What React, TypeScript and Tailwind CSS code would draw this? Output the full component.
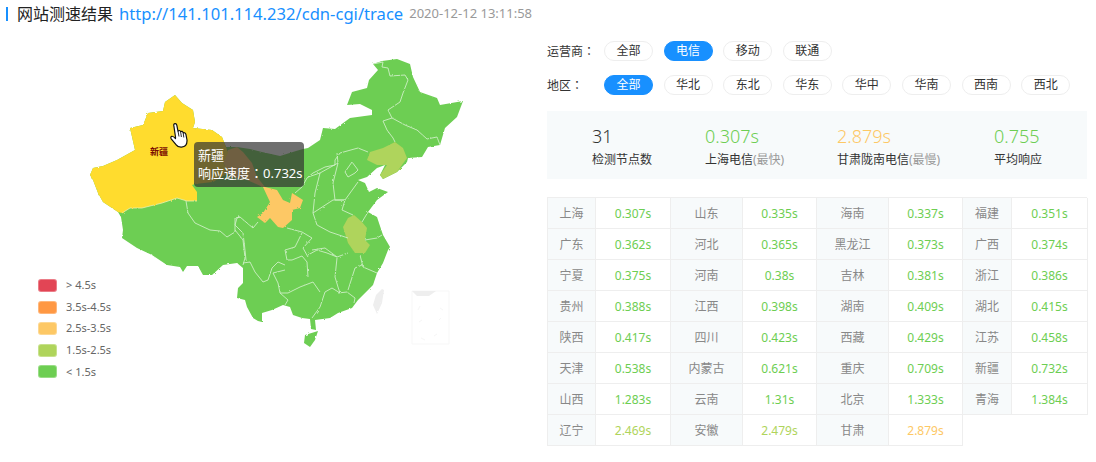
const GREEN = "#6dce52";

const OPERATORS = ["全部", "电信", "移动", "联通"];
const REGIONS = ["全部", "华北", "东北", "华东", "华中", "华南", "西南", "西北"];

const LEGEND = [
  { color: "#e24555", label: "> 4.5s" },
  { color: "#ff9843", label: "3.5s-4.5s" },
  { color: "#fdc865", label: "2.5s-3.5s" },
  { color: "#afd45b", label: "1.5s-2.5s" },
  { color: GREEN, label: "< 1.5s" },
];

const NODES: [string, string][] = [
  ["上海", "0.307s"], ["山东", "0.335s"], ["海南", "0.337s"], ["福建", "0.351s"],
  ["广东", "0.362s"], ["河北", "0.365s"], ["黑龙江", "0.373s"], ["广西", "0.374s"],
  ["宁夏", "0.375s"], ["河南", "0.38s"], ["吉林", "0.381s"], ["浙江", "0.386s"],
  ["贵州", "0.388s"], ["江西", "0.398s"], ["湖南", "0.409s"], ["湖北", "0.415s"],
  ["陕西", "0.417s"], ["四川", "0.423s"], ["西藏", "0.429s"], ["江苏", "0.458s"],
  ["天津", "0.538s"], ["内蒙古", "0.621s"], ["重庆", "0.709s"], ["新疆", "0.732s"],
  ["山西", "1.283s"], ["云南", "1.31s"], ["北京", "1.333s"], ["青海", "1.384s"],
  ["辽宁", "2.469s"], ["安徽", "2.479s"], ["甘肃", "2.879s"],
];

function valueColor(v: string) {
  const n = parseFloat(v);
  if (n >= 2.5) return "text-[#fdc865]";
  if (n >= 1.5) return "text-[#afd45b]";
  return "text-[#6dce52]";
}

// all map paths are in page pixels, the svg viewBox starts below the header
const CHINA =
  "M175 95L182 103L193 110L195 122L193 128L212 130L222 137L226 147L237 147L250 149L262 152L280 156L296 151L303 149L308 148L320 140L323 128L335 129L350 118L372 115L372 110L360 104L347 105L352 92L367 88L369 80L378 70L373 64L382 61L397 59L410 64L413 77L420 92L437 98L440 105L463 101L457 117L445 128L440 145L428 147L422 157L408 158L407 162L397 172L383 179L380 175L385 165L377 168L367 177L358 180L365 183L369 192L377 188L388 192L377 200L368 212L377 217L383 235L390 247L388 250L383 263L377 273L373 285L358 300L352 308L338 313L330 318L315 320L316 330L311 329L310 319L302 318L293 315L290 307L283 305L272 310L262 313L262 322L258 321L253 318L247 307L245 300L237 298L238 288L243 283L243 268L237 263L223 265L212 275L203 275L198 266L187 266L183 272L180 267L167 265L152 255L137 248L122 238L123 230L121 217L118 212L103 202L98 193L93 180L90 175L93 168L103 166L117 160L135 150L130 128L143 125L148 113L163 111L165 102Z";

const HAINAN = "M305 335L318 331L315 340L310 347L304 343Z";

const XINJIANG =
  "M175 95L182 103L193 110L195 122L193 128L212 130L222 137L226 147L228 153L223 162L228 173L213 182L195 184L192 185L197 192L197 201L187 201L177 198L162 203L142 208L130 208L122 213L118 212L103 202L98 193L93 180L90 175L93 168L103 166L117 160L135 150L130 128L143 125L148 113L163 111L165 102Z";

const GANSU =
  "M228 150L237 147L243 152L252 163L257 177L265 187L277 190L283 200L290 203L292 193L303 200L300 208L292 210L292 220L283 228L278 227L270 218L265 223L257 217L263 213L270 202L263 187L247 180L230 177L228 173L223 162Z";

const LIAONING =
  "M367 160L370 152L383 148L395 142L403 148L407 158L397 172L383 179L380 175L387 165L377 165Z";

const ANHUI =
  "M354 215L362 222L367 228L365 240L370 245L365 253L355 253L348 243L343 227L348 218Z";

const BORDERS = [
  "M373 64L383 62L382 67L388 68L390 76L405 75L408 80L403 93L400 102L388 110L392 118L383 121L387 130L393 138L395 142",
  "M392 118L405 125L417 130L427 139L437 137L440 145",
  "M368 152L358 148L340 153L335 160L335 165L325 167L313 173L307 178L302 187L295 193",
  "M337 153L338 163L320 173L308 177",
  "M338 163L333 183L335 200L345 200L358 182",
  "M345 172L352 162L358 170L355 173L348 177Z",
  "M320 173L315 193L313 213L333 200L345 200L342 210L353 215",
  "M313 213L317 225L330 232L348 238",
  "M287 228L302 232L312 238L303 248L308 257",
  "M240 217L237 218L235 225L243 233L245 250L246 260",
  "M258 222L253 228L240 217",
  "M186 201L188 213L195 223L210 230L220 231L227 237L235 232L235 218L240 217",
  "M235 230L243 240L245 258L243 265",
  "M243 263L250 262L255 272L263 282L268 280L272 268L278 262L285 265",
  "M302 233L295 247L285 250L287 260L292 260L302 256L307 262L308 277",
  "M273 273L285 270M273 273L278 283L280 293L288 293L300 287L313 282L320 292",
  "M280 293L288 300L285 305",
  "M308 255L317 250L327 253L337 257L348 253",
  "M312 250L325 248L337 257",
  "M337 258L335 277L338 287L340 293L332 288L325 292L320 307L312 318",
  "M338 293L347 292L355 298L354 303",
  "M362 265L355 268L348 290",
  "M360 255L363 267L377 273",
  "M365 240L377 238L382 235",
  "M368 212L362 222",
];

function Pill({ label, active }: { label: string; active?: boolean }) {
  return (
    <span
      className={`flex h-[20px] w-[49px] items-center justify-center rounded-full border text-xs ${
        active ? "border-[#1890ff] bg-[#1890ff] text-white" : "border-[#eeeeee] bg-white text-[#333]"
      }`}
    >
      {label}
    </span>
  );
}

function Colon() {
  return <span className="[font-family:'Noto_Sans_CJK_TC',sans-serif]">：</span>;
}

function ChinaMap() {
  return (
    <svg viewBox="0 28 540 434" className="block h-[434px] w-[540px]">
      <defs>
        <filter id="rough" x="0" y="0" width="100%" height="100%">
          <feTurbulence type="fractalNoise" baseFrequency="0.35" numOctaves="2" seed="4" />
          <feDisplacementMap in="SourceGraphic" scale="2.2" />
          <feGaussianBlur stdDeviation="0.25" />
        </filter>
      </defs>
      <g filter="url(#rough)">
        <path d={CHINA} fill={GREEN} />
        <path d={HAINAN} fill={GREEN} />
        <path d={GANSU} fill="#fdc865" />
        <path d={XINJIANG} fill="#ffdc2e" />
        <path d={LIAONING} fill="#afd45b" />
        <path d={ANHUI} fill="#afd45b" />
        {BORDERS.map((d) => (
          <path key={d} d={d} fill="none" stroke="#cdeec5" strokeWidth="0.9" />
        ))}
        <path d="M122 213L130 208L142 208L162 203L177 198L187 201L197 201" fill="none" stroke="#e8f0b0" strokeWidth="0.8" />
        <path d="M382 289L384 290L382 303L377 314L373 305L376 295Z" fill="#eeeeee" />
      </g>
      <path d="M412 291H449V344H412Z" fill="#ffffff" stroke="#f7f7f7" strokeWidth="1" />
      <path d="M412 291H436L429 296H417Z" fill="#eeeeee" />
      <path d="M418 310L420 306M440 308L443 310M419 322L422 320M439 320L441 318M421 338L425 340M434 336L437 334" stroke="#f6f6f6" strokeWidth="1" />
    </svg>
  );
}

function HandCursor() {
  return (
    <svg viewBox="0 0 18 25" className="absolute left-[170px] top-[95px] h-[25px] w-[18px]">
      <path
        d="M5.5 14L3.8 2.4Q3.6.7 5 .6Q6.4.5 6.8 2.2L8 8.2Q9.8 6.6 10.6 8.6Q12.4 7.6 13.2 9.8Q15.4 9.2 15.9 11.4L17 17Q17.4 23.8 11.5 24.2Q8 24.4 6.2 21.8L1.2 15.8Q.2 14 1.8 13.3Q3.2 12.9 5.5 15.6Z"
        fill="#ffffff"
        stroke="#111111"
        strokeWidth="1.2"
        strokeLinejoin="round"
      />
      <path d="M8 8.2L9 13.5M10.6 8.6L11.4 14M13.2 9.8L13.8 14.5" fill="none" stroke="#111111" strokeWidth="0.9" />
    </svg>
  );
}

export default function App() {
  return (
    <div className="h-[462px] w-[1096px] overflow-hidden bg-white text-[#333] [font-family:'Noto_Sans','Noto_Sans_CJK_SC',sans-serif]">
      {/* Header */}
      <div className="flex h-[28px] items-center whitespace-nowrap pl-[6px]">
        <span className="mr-[9px] h-[14px] w-[2px] bg-[#1890ff]" />
        <span className="text-base text-[#222]">网站测速结果</span>
        <span className="ml-[6px] text-[16.6px] text-[#1890ff]">http://141.101.114.232/cdn-cgi/trace</span>
        <span className="ml-[6px] text-[13px] text-[#999]">2020-12-12 13:11:58</span>
      </div>

      <div className="flex">
        {/* Map */}
        <div className="relative h-[434px] w-[540px] shrink-0">
          <ChinaMap />
          <span className="absolute left-[150px] top-[118px] text-[9px] font-bold leading-[12px] text-[#7a0a00]">新疆</span>
          <HandCursor />
          <div className="absolute left-[194px] top-[114px] h-[45px] w-[110px] whitespace-nowrap rounded bg-[rgba(50,50,50,0.7)] px-[4px] py-[4px] text-[13px] leading-[18px] text-white">
            <div>新疆</div>
            <div>响应速度<Colon />0.732s</div>
          </div>
          <div className="absolute left-[38px] top-[251px] flex flex-col gap-[8.6px]">
            {LEGEND.map((item) => (
              <div key={item.label} className="flex h-[13px] items-center">
                <span
                  className="h-[13px] w-[19px] rounded-[3px] border border-white/30"
                  style={{ backgroundColor: item.color }}
                />
                <span className="ml-[9px] text-[11px] text-[#666]">{item.label}</span>
              </div>
            ))}
          </div>
        </div>

        {/* Filters, summary, node table */}
        <div className="ml-[7px] w-[540px] shrink-0 pt-[13px]">
          <div className="flex items-center">
            <span className="w-[57px] text-xs">运营商<Colon /></span>
            <div className="flex gap-[10.6px]">
              {OPERATORS.map((name) => (
                <Pill key={name} label={name} active={name === "电信"} />
              ))}
            </div>
          </div>
          <div className="mt-[14px] flex items-center">
            <span className="w-[57px] text-xs">地区<Colon /></span>
            <div className="flex gap-[10.6px]">
              {REGIONS.map((name) => (
                <Pill key={name} label={name} active={name === "全部"} />
              ))}
            </div>
          </div>

          <div className="mt-[16px] grid h-[68px] grid-cols-[113px_132px_157px_1fr] content-center bg-[#f7fafb] pl-[45px] pt-[4px]">
            <div>
              <div className="text-lg font-light leading-[26px] text-[#333]">31</div>
              <div className="text-xs leading-[22px]">检测节点数</div>
            </div>
            <div>
              <div className="text-lg font-light leading-[26px] text-[#6dce52]">0.307s</div>
              <div className="text-xs leading-[22px]">上海电信<span className="text-[#999]">(最快)</span></div>
            </div>
            <div>
              <div className="text-lg font-light leading-[26px] text-[#fdc865]">2.879s</div>
              <div className="text-xs leading-[22px]">甘肃陇南电信<span className="text-[#999]">(最慢)</span></div>
            </div>
            <div>
              <div className="text-lg font-light leading-[26px] text-[#6dce52]">0.755</div>
              <div className="text-xs leading-[22px]">平均响应</div>
            </div>
          </div>

          <div className="mt-[18px] grid grid-cols-[48px_75px_72px_74px_72px_74px_49px_76px] border-l border-t border-[#eeeeee] text-xs">
            {NODES.map(([name, value]) => (
              <div key={name} className="contents">
                <div className="flex h-[31px] items-center justify-center border-b border-r border-[#eeeeee] bg-[#f7fafb] pt-px text-[#888]">
                  {name}
                </div>
                <div className={`flex h-[31px] items-center justify-center border-b border-r border-[#eeeeee] pt-px ${valueColor(value)}`}>
                  {value}
                </div>
              </div>
            ))}
          </div>
        </div>
      </div>
    </div>
  );
}
